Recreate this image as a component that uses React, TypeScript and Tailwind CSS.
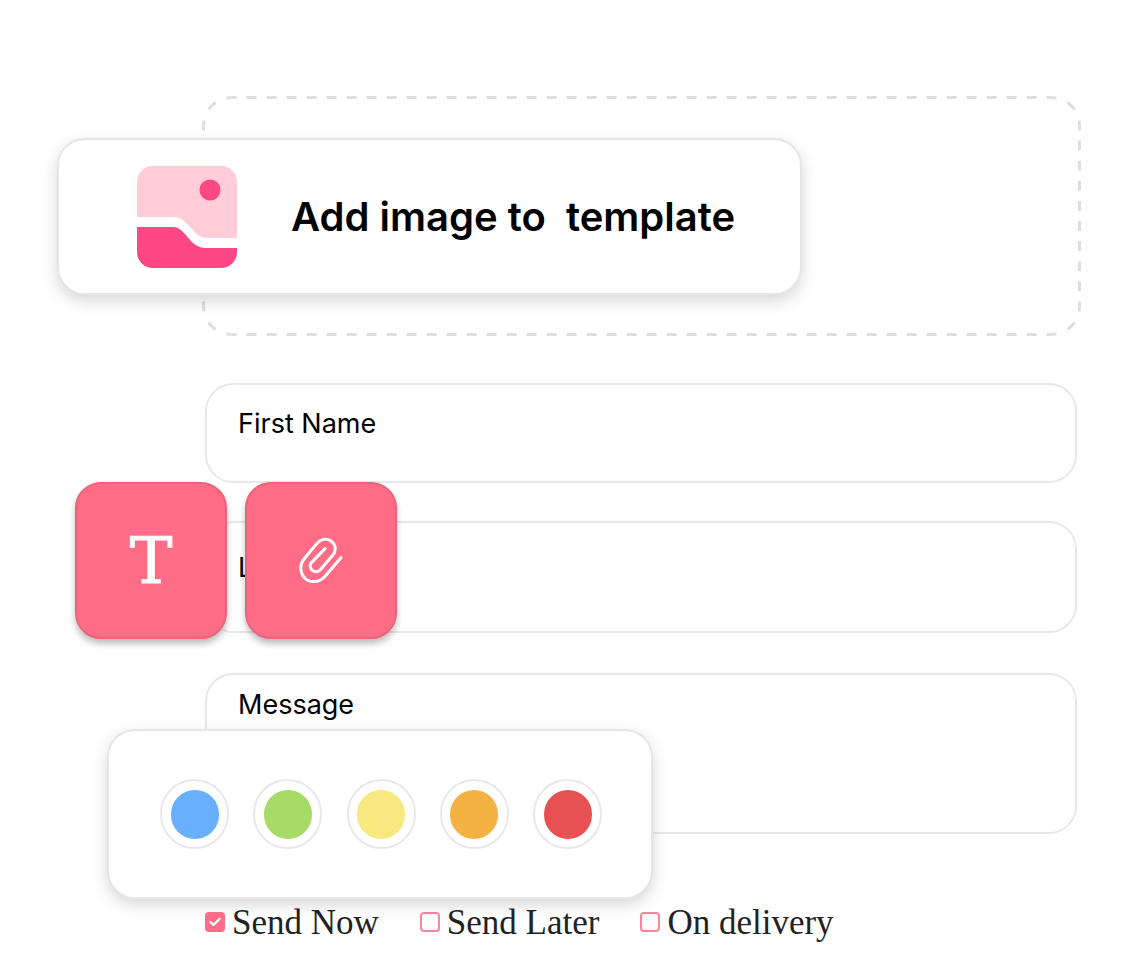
import React, { useState } from 'react';

const SWATCHES = [
    { name: 'Blue', fill: 'bg-[#68b0fd]' },
    { name: 'Green', fill: 'bg-[#a6db68]' },
    { name: 'Yellow', fill: 'bg-[#f7e97f]' },
    { name: 'Orange', fill: 'bg-[#f4b243]' },
    { name: 'Red', fill: 'bg-[#e85153]' },
];

const DELIVERY_OPTIONS = ['Send Now', 'Send Later', 'On delivery'];

const fieldClass =
    'block w-full rounded-[28px] border-2 border-[#e8e8e8] bg-white px-[31px] text-[27px] leading-8 text-black placeholder:text-black placeholder:opacity-100 outline-none';

const toolClass =
    'flex h-[157px] w-[152px] items-center justify-center rounded-[26px] border-2 border-[#ec647c] bg-[#ff6c85] text-white shadow-[0_5px_6px_rgba(0,0,0,0.25)]';

function ImageIcon() {
    return (
        <svg viewBox="0 0 100 102" className="h-[102px] w-[100px] shrink-0" aria-hidden="true">
            <path
                d="M16 0H84C93 0 100 7 100 16V72H71C64 72 60 69 56 64L50 58C46 54 43 51 37 51H0V16C0 7 7 0 16 0Z"
                fill="#ffccd7"
            />
            <path
                d="M0 61H36C41 61 44 64 47 67L54 75C58 79 62 82 69 82H100V86C100 95 93 102 84 102H16C7 102 0 95 0 86Z"
                fill="#ff4785"
            />
            <circle cx="73" cy="24" r="10.5" fill="#ff4785" />
        </svg>
    );
}

function ClipIcon() {
    return (
        <svg viewBox="718 203 132 141" className="h-[47px] w-[44px]" fill="none" aria-hidden="true">
            <path
                d="M844 265L795 322C778 340 750 342 735 326C720 310 720 285 733 269L772 222C782 209 800 206 813 214C829 225 831 243 819 258L782 301C776 309 765 309 758 303C750 296 749 287 756 279L796 238"
                stroke="currentColor"
                strokeWidth="9"
                strokeLinecap="round"
                strokeLinejoin="round"
            />
        </svg>
    );
}

// Long dashes, centred on every corner start so the frame stays symmetric
function DashedFrame() {
    return (
        <svg
            viewBox="0 0 878 240"
            preserveAspectRatio="none"
            className="h-full w-full"
            fill="none"
            stroke="#dedede"
            strokeWidth="3"
            aria-hidden="true"
        >
            <g strokeDasharray="10 9.98" strokeDashoffset="5">
                <path d="M29.5 1.5H848.5" />
                <path d="M29.5 238.5H848.5" />
            </g>
            <g strokeDasharray="10 10.1" strokeDashoffset="5">
                <path d="M1.5 29.5V210.5" />
                <path d="M876.5 29.5V210.5" />
            </g>
            <g strokeDasharray="10 12" strokeDashoffset="5">
                <path d="M1.5 29.5A28 28 0 0 1 29.5 1.5" />
                <path d="M848.5 1.5A28 28 0 0 1 876.5 29.5" />
                <path d="M876.5 210.5A28 28 0 0 1 848.5 238.5" />
                <path d="M29.5 238.5A28 28 0 0 1 1.5 210.5" />
            </g>
        </svg>
    );
}

export default function App() {
    const [delivery, setDelivery] = useState('Send Now');
    const [, setColor] = useState('Blue');

    return (
        <main className="min-h-screen bg-white pt-24 pr-[53px] pb-8 pl-[202px] font-['Inter',sans-serif]">
            <section className="relative h-60">
                <DashedFrame />
                <button
                    type="button"
                    className="absolute top-[42px] -left-[145px] flex h-[157px] w-[745px] items-center gap-[54px] rounded-[28px] border-2 border-[#e6e6e6] bg-white pl-[78px] shadow-[0_6px_16px_rgba(0,0,0,0.16)]"
                >
                    <ImageIcon />
                    <span className="text-[40px] leading-[48px] font-semibold whitespace-pre text-black">
                        {'Add image to  template'}
                    </span>
                </button>
            </section>

            <form className="mt-[47px] mr-1 ml-[3px]">
                <input
                    type="text"
                    aria-label="First Name"
                    placeholder="First Name"
                    className={`${fieldClass} h-[100px] pb-5`}
                />

                <div className="relative mt-[38px]">
                    <input
                        type="text"
                        aria-label="Last Name"
                        placeholder="Last Name"
                        className={`${fieldClass} h-[112px] pb-5`}
                    />
                    <div className="absolute -top-[39px] -left-[130px] flex gap-[18px]">
                        <button type="button" aria-label="Text" className={toolClass}>
                            <span className="font-['DejaVu_Serif',serif] text-[64px] leading-[72px] [-webkit-text-stroke:1px_white]">
                                T
                            </span>
                        </button>
                        <button type="button" aria-label="Attach file" className={toolClass}>
                            <ClipIcon />
                        </button>
                    </div>
                </div>

                <div className="relative mt-10">
                    <textarea
                        aria-label="Message"
                        placeholder="Message"
                        className={`${fieldClass} h-[161px] resize-none pt-[14px]`}
                    />
                    <div className="absolute top-14 -left-[98px] flex h-[170px] w-[546px] items-center justify-between rounded-[28px] border-2 border-[#e6e6e6] bg-white pr-[49px] pl-[51px] shadow-[0_6px_16px_rgba(0,0,0,0.16)]">
                        {SWATCHES.map((s) => (
                            <button
                                key={s.name}
                                type="button"
                                aria-label={s.name}
                                onClick={() => setColor(s.name)}
                                className="flex h-[70px] w-[69px] items-center justify-center rounded-full border-2 border-[#e8e8e8]"
                            >
                                <span className={`h-[49px] w-12 rounded-full ${s.fill}`} />
                            </button>
                        ))}
                    </div>
                </div>

                <div className="relative mt-[67px] flex gap-[41px]">
                    {DELIVERY_OPTIONS.map((option) => (
                        <label
                            key={option}
                            className="flex items-center gap-[7px] font-['Liberation_Serif',serif] text-[35px] leading-10 whitespace-nowrap text-[#222]"
                        >
                            <span className="grid">
                                <input
                                    type="checkbox"
                                    checked={delivery === option}
                                    onChange={() => setDelivery(option)}
                                    className="col-start-1 row-start-1 size-5 appearance-none rounded-[4px] border-2 border-[#ff8499] bg-white checked:border-[#ff6c85] checked:bg-[#ff6c85]"
                                />
                                {delivery === option && (
                                    <svg
                                        viewBox="0 0 20 20"
                                        className="pointer-events-none col-start-1 row-start-1 size-5"
                                        fill="none"
                                        aria-hidden="true"
                                    >
                                        <path
                                            d="M5.5 10L8.5 13L14.5 7"
                                            stroke="white"
                                            strokeWidth="2.4"
                                            strokeLinecap="round"
                                            strokeLinejoin="round"
                                        />
                                    </svg>
                                )}
                            </span>
                            <span className="pt-0.5">{option}</span>
                        </label>
                    ))}
                </div>
            </form>
        </main>
    );
}
